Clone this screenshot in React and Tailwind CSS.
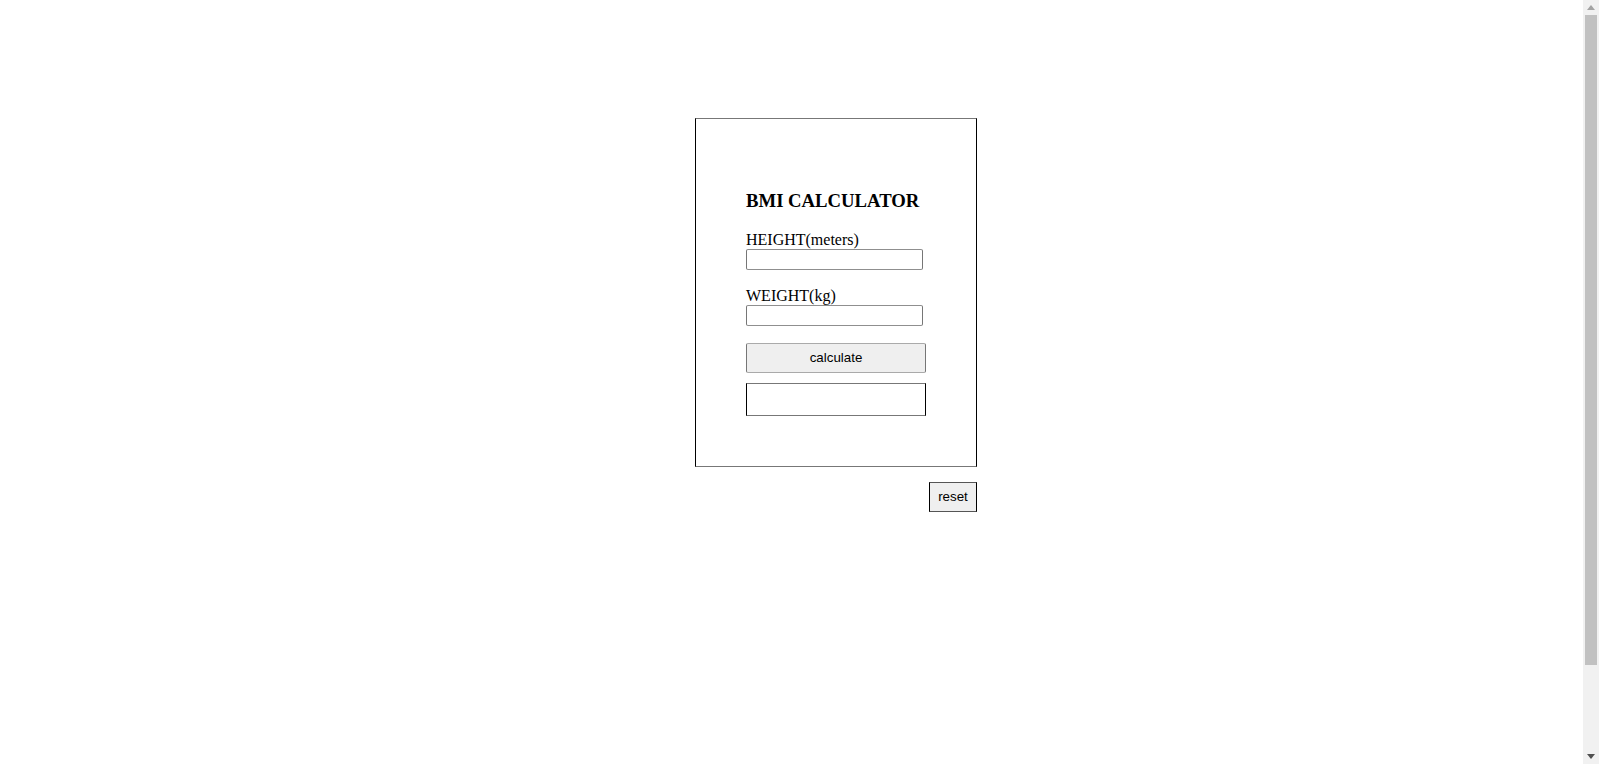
import { useState } from "react";

function ScrollBar() {
    return (
        <div className="w-[16px] h-[764px] bg-[#f1f1f1] flex flex-col items-center shrink-0">
            <div className="h-[15px] w-full flex items-center justify-center">
                <svg width="8" height="5" viewBox="0 0 8 5">
                    <polygon points="0,5 8,5 4,0" fill="#a3a3a3" />
                </svg>
            </div>
            <div className="w-[12px] h-[650px] bg-[#c1c1c1]"></div>
            <div className="flex-1"></div>
            <div className="h-[15px] w-full flex items-center justify-center">
                <svg width="8" height="5" viewBox="0 0 8 5">
                    <polygon points="0,0 8,0 4,5" fill="#505050" />
                </svg>
            </div>
        </div>
    );
}

export default function App() {
    const [height, setheight] = useState("");
    const [weight, setweight] = useState("");
    const [result, setresult] = useState("");

    function calculate() {
        const h = parseFloat(height);
        const w = parseFloat(weight);
        if (isNaN(h) || isNaN(w) || h <= 0) {
            setresult("");
            return;
        }
        setresult((w / (h * h)).toFixed(2));
    }

    function reset() {
        setheight("");
        setweight("");
        setresult("");
    }

    return (
        <div className="h-[764px] overflow-hidden flex bg-white text-black font-['Liberation_Serif',serif]">
            <div className="flex-1">
                <div className="ml-[695px] pt-[118px] w-[282px] flex flex-col items-end">
                    <div className="w-full h-[349px] border border-black border-y-[#777777] pt-[71px] pl-[50px] flex flex-col items-start">
                        <h3 className="text-[18.72px] leading-[22px] font-bold mb-[19px]">BMI CALCULATOR</h3>
                        <label className="text-[16px] leading-[18px]">HEIGHT(meters)</label>
                        <input
                            type="text"
                            value={height}
                            onChange={(e) => setheight(e.target.value)}
                            className="w-[177px] h-[21px] border border-[#767676] border-y-[#8f8f8f] rounded-[2px] bg-white px-[2px] text-[13.33px] font-['Liberation_Sans',sans-serif] outline-none"
                        />
                        <label className="text-[16px] leading-[18px] mt-[17px]">WEIGHT(kg)</label>
                        <input
                            type="text"
                            value={weight}
                            onChange={(e) => setweight(e.target.value)}
                            className="w-[177px] h-[21px] border border-[#767676] border-y-[#8f8f8f] rounded-[2px] bg-white px-[2px] text-[13.33px] font-['Liberation_Sans',sans-serif] outline-none"
                        />
                        <button
                            onClick={calculate}
                            className="mt-[17px] w-[180px] h-[30px] bg-[#efefef] border border-[#767676] border-y-[#aaaaaa] rounded-[2px] text-[13.33px] font-['Liberation_Sans',sans-serif] text-black"
                        >
                            calculate
                        </button>
                        <div className="mt-[10px] w-[180px] h-[33px] border border-black border-y-[#777777] flex items-center justify-center text-[16px]">
                            {result}
                        </div>
                    </div>
                    <button
                        onClick={reset}
                        className="mt-[15px] w-[48px] h-[30px] bg-[#efefef] border border-black border-y-[#555555] text-[13.33px] font-['Liberation_Sans',sans-serif] text-black"
                    >
                        reset
                    </button>
                </div>
            </div>
            <ScrollBar />
        </div>
    );
}
